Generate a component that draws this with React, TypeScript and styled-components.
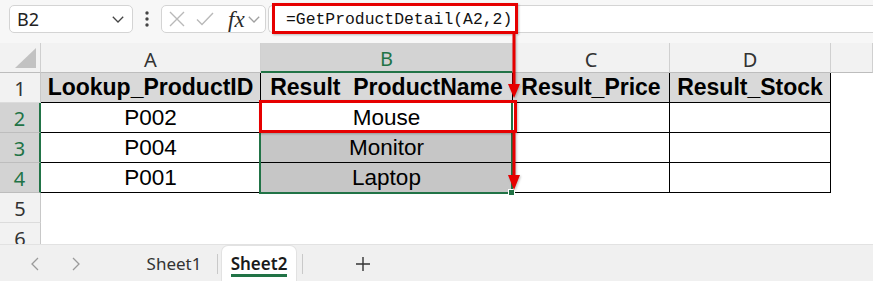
import React from "react";
import styled, { createGlobalStyle } from "styled-components";

const GREEN = "#217346";
const RED = "#e60000";

const GlobalStyle = createGlobalStyle`
  html, body {
    margin: 0;
    padding: 0;
    background: #ffffff;
  }
  body {
    font-family: 'Liberation Sans', Arial, sans-serif;
  }
  * {
    box-sizing: border-box;
  }
`;

// whole window
const Window = styled.div`
  position: relative;
  width: 873px;
  height: 281px;
  overflow: hidden;
  background: #f7f7f7;
  display: flex;
  flex-direction: column;
`;

// formula bar
const FormulaBar = styled.div`
  display: flex;
  align-items: flex-start;
  height: 43px;
  padding: 5px 0 0 9px;
  flex-shrink: 0;
`;

const NameBox = styled.div`
  width: 124px;
  height: 28px;
  display: flex;
  align-items: center;
  justify-content: space-between;
  padding: 0 8px 0 7px;
  background: #ffffff;
  border: 1px solid #d4d4d4;
  border-radius: 5px;
  font-family: 'Noto Sans', sans-serif;
  font-size: 18px;
  color: #222;
`;

const Dots = styled.div`
  width: 28px;
  height: 28px;
  display: flex;
  align-items: center;
  justify-content: center;
`;

const FxBox = styled.div`
  width: 105px;
  height: 28px;
  display: flex;
  align-items: center;
  padding-left: 7px;
  gap: 11px;
  background: #ffffff;
  border: 1px solid #d4d4d4;
  border-radius: 5px;
`;

const Fx = styled.span`
  font-family: 'Liberation Serif', serif;
  font-style: italic;
  font-size: 23px;
  color: #2b2b2b;
  margin-left: 3px;
  margin-right: -8px;
  line-height: 1;
`;

const FormulaInput = styled.div`
  flex: 1;
  height: 28px;
  margin-left: 2px;
  padding-left: 17px;
  display: flex;
  align-items: center;
  background: #ffffff;
  border: 1px solid #d4d4d4;
  border-right: none;
  border-radius: 5px 0 0 5px;
  font-family: 'Liberation Mono', monospace;
  font-size: 16.4px;
  color: #111;
`;

// sheet grid
const Sheet = styled.div`
  display: grid;
  grid-template-columns: 41px 220px 252px 157px 161px 1fr;
  grid-template-rows: repeat(6, 30px) 1fr;
  height: 201px;
  overflow: hidden;
  background: #ffffff;
`;

const Corner = styled.div`
  display: flex;
  align-items: flex-end;
  justify-content: flex-end;
  padding: 0 4px 4px 0;
  background: #f2f2f2;
  border-right: 1px solid #cfcfcf;
  border-bottom: 1px solid #bdbdbd;
`;

const Triangle = styled.div`
  width: 21px;
  height: 20px;
  background: #c2c2c2;
  clip-path: polygon(100% 0, 100% 100%, 0 100%);
`;

const ColHeader = styled.div<{ $selected?: boolean }>`
  display: flex;
  align-items: center;
  justify-content: center;
  padding-top: 3px;
  font-family: 'Noto Sans', sans-serif;
  font-size: 20px;
  color: ${(p) => (p.$selected ? GREEN : "#333")};
  background: ${(p) => (p.$selected ? "#d3d3d3" : "#f2f2f2")};
  border-right: 1px solid #d0d0d0;
  border-bottom: ${(p) => (p.$selected ? `2px solid ${GREEN}` : "1px solid #bdbdbd")};
`;

const RowHeader = styled.div<{ $selected?: boolean }>`
  display: flex;
  align-items: center;
  justify-content: center;
  padding-top: 2px;
  font-family: 'Noto Sans', sans-serif;
  font-size: 20px;
  color: ${(p) => (p.$selected ? GREEN : "#333")};
  background: ${(p) => (p.$selected ? "#d3d3d3" : "#f2f2f2")};
  border-right: ${(p) => (p.$selected ? `2px solid ${GREEN}` : "1px solid #c8c8c8")};
  border-bottom: 1px solid ${(p) => (p.$selected ? "#bdbdbd" : "#dcdcdc")};
`;

const Cell = styled.div<{ $head?: boolean; $shade?: boolean; $boxed?: boolean }>`
  display: flex;
  align-items: center;
  justify-content: center;
  white-space: pre;
  overflow: visible;
  font-size: ${(p) => (p.$head ? "23px" : "22.5px")};
  font-weight: ${(p) => (p.$head ? 700 : 400)};
  color: #000;
  background: ${(p) => (p.$head ? "#d9d9d9" : p.$shade ? "#c6c6c6" : "#ffffff")};
  border-right: 1px solid ${(p) => (p.$boxed ? "#000" : "transparent")};
  border-bottom: 1px solid ${(p) => (p.$boxed ? "#000" : "transparent")};
`;

// sheet tabs
const TabBar = styled.div`
  display: flex;
  align-items: stretch;
  height: 37px;
  padding: 1px 0 0 14px;
  background: #f0f0f0;
  border-top: 1px solid #e2e2e2;
  flex-shrink: 0;
`;

const NavButton = styled.div`
  width: 41px;
  display: flex;
  align-items: center;
  justify-content: center;
`;

const Tab = styled.div<{ $active?: boolean }>`
  width: 74px;
  display: flex;
  align-items: center;
  justify-content: center;
  padding-top: ${(p) => (p.$active ? "0" : "4px")};
  background: ${(p) => (p.$active ? "#ffffff" : "transparent")};
  border-radius: 6px 6px 0 0;
  box-shadow: ${(p) => (p.$active ? "0 0 0 1px #e2e2e2" : "none")};
  margin-left: ${(p) => (p.$active ? "4px" : "41px")};
`;

const TabLabel = styled.span<{ $active?: boolean }>`
  font-family: 'Noto Sans', sans-serif;
  font-size: 17px;
  font-weight: ${(p) => (p.$active ? 600 : 400)};
  color: ${(p) => (p.$active ? "#1a1a1a" : "#333")};
  line-height: 20px;
  padding-top: ${(p) => (p.$active ? "3px" : "0")};
  border-bottom: 3px solid ${(p) => (p.$active ? GREEN : "transparent")};
`;

const Divider = styled.div`
  width: 1px;
  height: 20px;
  align-self: center;
  margin-left: 6px;
  background: #c9c9c9;
`;

const AddButton = styled.div`
  width: 40px;
  margin-left: 40px;
  display: flex;
  align-items: center;
  justify-content: center;
`;

// overlays
const Selection = styled.div`
  position: absolute;
  left: 259px;
  top: 101px;
  width: 254px;
  height: 93px;
  border: 2px solid ${GREEN};
  pointer-events: none;
`;

const FillHandle = styled.div`
  position: absolute;
  left: 508px;
  top: 189px;
  width: 7px;
  height: 7px;
  background: ${GREEN};
  border: 1px solid #ffffff;
`;

const Callout = styled.div<{ $left: number; $top: number; $w: number; $h: number }>`
  position: absolute;
  left: ${(p) => p.$left}px;
  top: ${(p) => p.$top}px;
  width: ${(p) => p.$w}px;
  height: ${(p) => p.$h}px;
  border: 3px solid ${RED};
  box-shadow: 1px 1px 2px rgba(0, 0, 0, 0.25);
  pointer-events: none;
`;

const ArrowLayer = styled.svg`
  position: absolute;
  left: 0;
  top: 0;
  pointer-events: none;
  filter: drop-shadow(1px 1px 1px rgba(0, 0, 0, 0.25));
`;

const Chevron = ({ color = "#444" }: { color?: string }) => (
  <svg width="12" height="7" viewBox="0 0 12 7">
    <polyline points="0.8,0.8 6,6 11.2,0.8" fill="none" stroke={color} strokeWidth="1.3" />
  </svg>
);

const rows = [
  ["Lookup_ProductID", "Result  ProductName", "Result_Price", "Result_Stock"],
  ["P002", "Mouse", "", ""],
  ["P004", "Monitor", "", ""],
  ["P001", "Laptop", "", ""],
];

const colLetters = ["A", "B", "C", "D"];

export default function App() {
  return (
    <>
      <GlobalStyle />
      <Window>
        <FormulaBar>
          <NameBox>
            <span>B2</span>
            <Chevron />
          </NameBox>
          <Dots>
            <svg width="4" height="16" viewBox="0 0 4 16">
              <circle cx="2" cy="2" r="1.7" fill="#444" />
              <circle cx="2" cy="8" r="1.7" fill="#444" />
              <circle cx="2" cy="14" r="1.7" fill="#444" />
            </svg>
          </Dots>
          <FxBox>
            <svg width="16" height="16" viewBox="0 0 16 16">
              <path d="M1 1 L15 15 M15 1 L1 15" stroke="#b9b9b9" strokeWidth="1.4" fill="none" />
            </svg>
            <svg width="18" height="14" viewBox="0 0 18 14">
              <polyline points="1,7.5 6,12.5 17,1" stroke="#b9b9b9" strokeWidth="1.4" fill="none" />
            </svg>
            <Fx>fx</Fx>
            <Chevron color="#a0a0a0" />
          </FxBox>
          <FormulaInput>=GetProductDetail(A2,2)</FormulaInput>
        </FormulaBar>

        <Sheet>
          <Corner>
            <Triangle />
          </Corner>
          {colLetters.map((c) => (
            <ColHeader key={c} $selected={c === "B"}>
              {c}
            </ColHeader>
          ))}
          <ColHeader />

          {rows.map((r, i) => (
            <React.Fragment key={i}>
              <RowHeader $selected={i >= 1}>{i + 1}</RowHeader>
              {r.map((v, j) => (
                <Cell key={j} $boxed $head={i === 0} $shade={i >= 2 && j === 1}>
                  {v}
                </Cell>
              ))}
              <Cell />
            </React.Fragment>
          ))}

          {[5, 6].map((n) => (
            <React.Fragment key={n}>
              <RowHeader>{n}</RowHeader>
              <Cell />
              <Cell />
              <Cell />
              <Cell />
              <Cell />
            </React.Fragment>
          ))}
        </Sheet>

        <TabBar>
          <NavButton>
            <svg width="8" height="14" viewBox="0 0 8 14">
              <polyline points="7,1 1,7 7,13" fill="none" stroke="#9a9a9a" strokeWidth="1.3" />
            </svg>
          </NavButton>
          <NavButton>
            <svg width="8" height="14" viewBox="0 0 8 14">
              <polyline points="1,1 7,7 1,13" fill="none" stroke="#9a9a9a" strokeWidth="1.3" />
            </svg>
          </NavButton>
          <Tab>
            <TabLabel>Sheet1</TabLabel>
          </Tab>
          <Divider />
          <Tab $active>
            <TabLabel $active>Sheet2</TabLabel>
          </Tab>
          <Divider />
          <AddButton>
            <svg width="14" height="14" viewBox="0 0 14 14">
              <path d="M7 0 V14 M0 7 H14" stroke="#333" strokeWidth="1.4" />
            </svg>
          </AddButton>
        </TabBar>

        <Selection />
        <FillHandle />
        <Callout $left={272} $top={3} $w={246} $h={31} />
        <Callout $left={259} $top={100} $w={258} $h={33} />
        <ArrowLayer width="873" height="281" viewBox="0 0 873 281">
          <line x1="514" y1="34" x2="514" y2="86" stroke={RED} strokeWidth="3" />
          <polygon points="508,84 520,84 514,98" fill={RED} />
          <line x1="514" y1="133" x2="514" y2="177" stroke={RED} strokeWidth="3" />
          <polygon points="508,175 520,175 514,190" fill={RED} />
        </ArrowLayer>
      </Window>
    </>
  );
}
